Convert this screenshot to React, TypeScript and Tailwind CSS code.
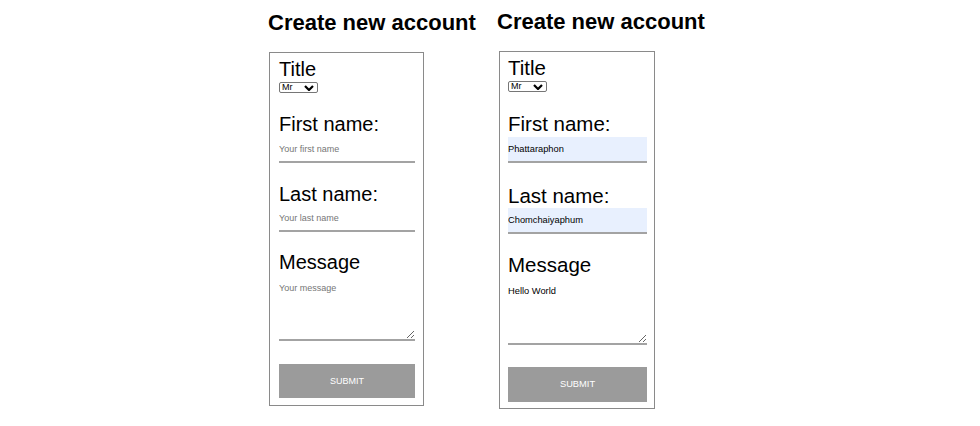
import React from "react";

function TitleSelect() {
  return (
    <div className="relative mt-[3px] w-[39px] h-[11px]">
      <select
        defaultValue="Mr"
        className="block appearance-none w-full h-full border border-[#767676] rounded-[2px] bg-white text-[9px] leading-none pl-[2px] py-0 text-black"
      >
        <option>Mr</option>
        <option>Mrs</option>
        <option>Ms</option>
      </select>
      <svg
        className="pointer-events-none absolute right-[4px] top-[3px]"
        width="10"
        height="6"
        viewBox="0 0 10 6"
      >
        <polyline points="1,1 5,5 9,1" fill="none" stroke="#000" strokeWidth="2.2" />
      </svg>
    </div>
  );
}

function LeftPanel() {
  return (
    <form className="ml-px mt-[18px] w-[155px] border border-[#8a8a8a] pl-[9px] pr-[8px] pt-[6px] pb-[7px] flex flex-col">
      <label className="text-[20px] leading-[20px] text-black">Title</label>
      <TitleSelect />
      <label className="mt-[21px] text-[20px] leading-[20px] text-black">First name:</label>
      <input
        placeholder="Your first name"
        className="mt-[3px] h-[26px] w-full border-b-2 border-[#a3a3a3] bg-transparent p-0 text-[9px] leading-[12px] text-black placeholder:text-[#767676] outline-none"
      />
      <label className="mt-[21px] text-[20px] leading-[20px] text-black">Last name:</label>
      <input
        placeholder="Your last name"
        className="mt-[2px] h-[26px] w-full border-b-2 border-[#a3a3a3] bg-transparent p-0 text-[9px] leading-[12px] text-black placeholder:text-[#767676] outline-none"
      />
      <label className="mt-[20px] text-[20px] leading-[20px] text-black">Message</label>
      <textarea
        placeholder="Your message"
        className="mt-[4px] h-[65px] w-full border-b-2 border-[#a3a3a3] bg-transparent p-0 pt-[6px] text-[9px] leading-[12px] text-black placeholder:text-[#767676] outline-none"
      />
      <button
        type="button"
        className="mt-[23px] h-[34px] w-full bg-[#9b9b9b] text-[9px] leading-none text-white"
      >
        SUBMIT
      </button>
    </form>
  );
}

function RightPanel() {
  return (
    <form className="ml-[2px] mt-[18px] w-[156px] border border-[#8a8a8a] pl-[8px] pr-[7px] pt-[6px] pb-[6px] flex flex-col">
      <label className="text-[20.5px] leading-[20px] text-black">Title</label>
      <TitleSelect />
      <label className="mt-[22px] text-[20.5px] leading-[20px] text-black">First name:</label>
      <input
        defaultValue="Phattaraphon"
        className="mt-[3px] h-[26px] w-full border-b-2 border-[#a3a3a3] bg-[#e8f0fe] p-0 text-[9.3px] leading-[12px] text-black outline-none"
      />
      <label className="mt-[23px] text-[20.5px] leading-[20px] text-black">Last name:</label>
      <input
        defaultValue="Chomchaiyaphum"
        className="mt-[2px] h-[26px] w-full border-b-2 border-[#a3a3a3] bg-[#e8f0fe] p-0 text-[9.3px] leading-[12px] text-black outline-none"
      />
      <label className="mt-[21px] text-[20.5px] leading-[20px] text-black">Message</label>
      <textarea
        defaultValue="Hello World"
        className="mt-[3px] h-[67px] w-full border-b-2 border-[#a3a3a3] bg-transparent p-0 pt-[7px] text-[9.3px] leading-[12px] text-black outline-none"
      />
      <button
        type="button"
        className="mt-[22px] h-[35px] w-full bg-[#9b9b9b] text-[9.3px] leading-none text-white"
      >
        SUBMIT
      </button>
    </form>
  );
}

export default function App() {
  return (
    <div
      className="w-[980px] h-[426px] bg-white flex items-start pl-[268px]"
      style={{ fontFamily: '"Liberation Sans", Arial, sans-serif' }}
    >
      <div className="w-[229px] pt-[12px] flex flex-col">
        <h1 className="text-[22px] leading-[22px] font-bold text-black whitespace-nowrap">
          Create new account
        </h1>
        <LeftPanel />
      </div>
      <div className="pt-[11px] flex flex-col">
        <h1 className="text-[22px] leading-[22px] font-bold text-black whitespace-nowrap">
          Create new account
        </h1>
        <RightPanel />
      </div>
    </div>
  );
}
